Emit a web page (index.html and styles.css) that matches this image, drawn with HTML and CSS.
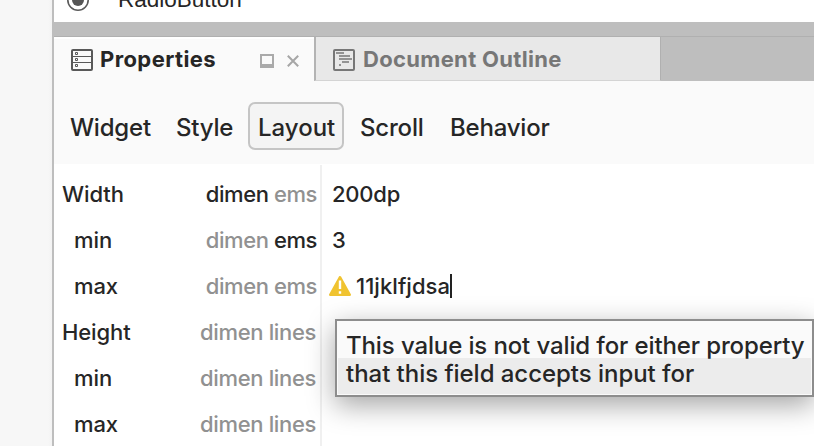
FILE: index.html
```html
<!DOCTYPE html>
<html lang="en">
<head>
<meta charset="utf-8">
<title>Properties</title>
<link rel="stylesheet" href="styles.css">
</head>
<body>
<div class="app">
  <aside class="gutter"></aside>
  <main class="panel">
    <div class="palette">
      <svg class="radio" width="24" height="24" viewBox="0 0 24 24"><circle cx="12" cy="12" r="10.2" fill="none" stroke="#5a5a5a" stroke-width="1.6"/><circle cx="12" cy="12" r="6" fill="#555"/></svg>
      <span class="palette-name">RadioButton</span>
    </div>
    <div class="splitter"></div>
    <nav class="tabs">
      <div class="tab active">
        <svg class="tab-icon" width="22" height="22" viewBox="0 0 22 22" fill="none" stroke="#595959"><rect x="1" y="1" width="20" height="20" rx="1" stroke-width="2"/><path d="M1 7.5H21M1 13.5H21" stroke-width="1"/><path d="M4.5 3.5h2v2h-2zM4.5 9.5h2v2h-2zM4.5 15.5h2v2h-2z" stroke-width="1"/></svg>
        <span class="tab-title props">Properties</span>
        <svg class="minimize" width="14" height="14" viewBox="0 0 14 14"><path d="M0 0H14V14H0zM2 2V10H12V2z" fill="#aaa" fill-rule="evenodd"/></svg>
        <svg class="close" width="12" height="12" viewBox="0 0 12 12"><path d="M.8.8 11.2 11.2M11.2.8.8 11.2" stroke="#a6a6a6" stroke-width="2"/></svg>
      </div>
      <div class="tab idle">
        <svg class="tab-icon" width="22" height="22" viewBox="0 0 22 22" fill="none" stroke="#777"><rect x="1" y="1" width="20" height="20" rx="1" stroke-width="2"/><path d="M3 4H11M6 7H17M6 10H19M9 13H16M6 16H8" stroke-width="1.7"/></svg>
        <span class="tab-title outline">Document Outline</span>
      </div>
    </nav>
    <div class="filters">
      <span class="filter widget">Widget</span>
      <span class="filter style">Style</span>
      <span class="filter selected">Layout</span>
      <span class="filter scroll">Scroll</span>
      <span class="filter behavior">Behavior</span>
    </div>
    <div class="grid">
      <div class="row"><span class="name">Width</span><span class="units"><b>dimen</b> ems</span><span class="value">200dp</span></div>
      <div class="row"><span class="name sub">min</span><span class="units">dimen <b>ems</b></span><span class="value">3</span></div>
      <div class="row"><span class="name sub">max</span><span class="units">dimen ems</span><span class="value invalid"><svg class="warning" width="22" height="20" viewBox="0 0 22 20"><path d="M11 1.2 20.8 18.8H1.2z" fill="#f0c330" stroke="#f0c330" stroke-width="2.4" stroke-linejoin="round"/><path d="M11 4.5V13M11 15.3V17.8" stroke="#fff" stroke-width="2.4"/></svg><span class="entry">11jklfjdsa</span><i class="caret"></i></span></div>
      <div class="row"><span class="name">Height</span><span class="units lines">dimen lines</span><span class="value"></span></div>
      <div class="row"><span class="name sub">min</span><span class="units lines">dimen lines</span><span class="value"></span></div>
      <div class="row"><span class="name sub">max</span><span class="units lines">dimen lines</span><span class="value"></span></div>
    </div>
  </main>
  <div class="tooltip"><span class="tip-first">This value is not valid for either property</span><span class="tip-second">that this field accepts input for</span></div>
</div>
</body>
</html>
```
FILE: styles.css
```css
* { box-sizing: border-box; }
body { margin: 0; overflow: hidden; font-family: Inter, "Liberation Sans", sans-serif; font-size: 22px; font-weight: 450; line-height: 28px; color: #262626; white-space: nowrap; }
.app { position: relative; display: flex; width: 814px; height: 446px; overflow: hidden; }
.gutter { flex: 0 0 54px; background: linear-gradient(90deg, #f7f7f7 48px, #f3f3f3 52px); border-right: 2px solid #bebebe; }
.panel { flex: 1; min-width: 0; background: #fff; }
.palette { display: flex; align-items: flex-end; height: 22px; padding: 0 12px; overflow: hidden; }
.radio { flex: none; margin-bottom: 10px; }
.palette-name { margin: 0 0 8px 28px; font-family: "Liberation Sans", sans-serif; font-size: 22.5px; }
.splitter { height: 15px; background: #bebebe; border-bottom: 1px solid #b0b0b0; }
.tabs { display: flex; height: 44px; background: #bebebe; }
.tab { display: flex; align-items: center; }
.tab.active { width: 260px; padding: 0 13px 0 17px; background: #fafafa; border-top: 2px solid #fff; }
.tab.idle { width: 347px; padding: 2px 0 0 17px; background: #e8e8e8; border-left: 2px solid #b3b3b3; border-right: 1px solid #b0b0b0; border-bottom: 1px solid #d4d4d4; color: #777; }
.tab-icon { flex: none; }
.tab-title { font-weight: 700; margin: -2px 0 0 7px; letter-spacing: .4px; }
.outline { margin-top: -1px; margin-left: 8px; letter-spacing: .32px; }
.minimize { margin-left: auto; margin-top: 2px; }
.close { margin: 2px 2px 0 13px; }
.filters { display: flex; align-items: center; height: 83px; padding: 7px 0 0 16px; background: #fafafa; font-size: 24px; margin-bottom: 1px; }
.filter { flex: none; padding-top: 4px; letter-spacing: -.2px; }
.widget { width: 106px; }
.style { width: 72px; }
.selected { width: 96px; height: 48px; padding: 10px 8px 6px; border: 2px solid #c5c5c5; border-radius: 7px; background: #f4f4f4; letter-spacing: 0; }
.scroll { width: 90px; margin-left: 16px; }
.grid { padding-top: 6px; height: 281px; background: linear-gradient(#f0f0f0, #f0f0f0) 266px 0 / 2px 100% no-repeat; }
.row { display: flex; align-items: center; height: 46px; }
.name { width: 112px; padding-left: 8px; letter-spacing: -.1px; }
.name.sub { padding-left: 20px; }
.units { width: 152px; padding-right: 1px; text-align: right; color: #919191; letter-spacing: -.42px; }
.units.lines { padding-right: 2px; letter-spacing: -.35px; }
.units b { font-weight: inherit; color: #262626; }
.value { margin-left: 14px; display: flex; align-items: center; letter-spacing: -.2px; }
.value.invalid { margin-left: 11px; }
.entry { margin-left: 5px; letter-spacing: .05px; }
.caret { width: 2px; height: 24px; background: #222; }
.tooltip { position: absolute; left: 335px; top: 319px; width: 479px; height: 78px; border: 2px solid #8d8d8d; background: linear-gradient(#fafafa 37px, #ececec 37px); box-shadow: inset 0 0 0 1px #fafafa, 0 8px 28px rgba(0,0,0,.36); padding: 11px 0 0 9px; font-size: 24px; letter-spacing: -.12px; display: flex; flex-direction: column; align-items: flex-start; }
.tip-second { letter-spacing: -.04px; }
```
